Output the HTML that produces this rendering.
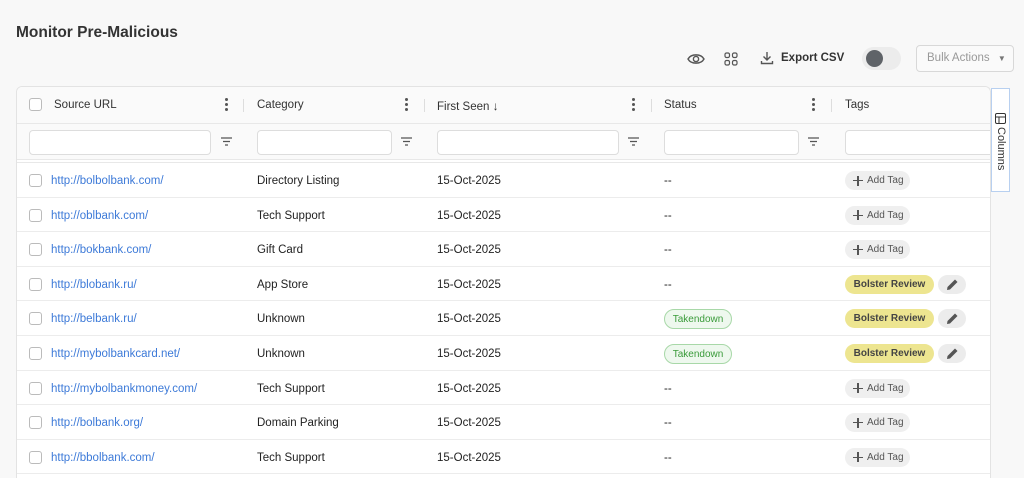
<!DOCTYPE html>
<html style="height:478px;overflow:hidden"><head><style>
*{box-sizing:border-box;margin:0;padding:0}
body{width:1024px;height:478px;overflow:hidden;background:#f8f8f8;font-family:"Liberation Sans",sans-serif;position:relative;color:#222}
.abs{position:absolute}
h1{position:absolute;left:16px;top:24px;font-size:15.5px;font-weight:bold;color:#333}
.tbl{position:absolute;left:16px;top:86px;width:975px;height:392px;background:#fff;border:1px solid #e3e3e3;border-bottom:none;border-radius:6px 6px 0 0;overflow:hidden}
.hdr{position:absolute;left:0;top:0;width:100%;height:37px;background:#fafafa;border-bottom:1px solid #e8e8e8}
.flt{position:absolute;left:0;top:37px;width:100%;height:36px;background:#fafafa;border-bottom:1px solid #e8e8e8}
.ht{position:absolute;top:12px;font-size:11.5px;color:#333}
.dots{position:absolute;top:11px;width:3px;height:14px}
.dots i{display:block;width:3px;height:3px;border-radius:50%;background:#555;margin-bottom:2px}
.sep{position:absolute;top:12px;width:1px;height:13px;background:#ddd}
.in{position:absolute;top:6px;height:25px;background:#fff;border:1px solid #ddd;border-radius:4px}
.fi{position:absolute;top:13px}
.cb{position:absolute;width:13px;height:13px;border:1px solid #bbb;border-radius:3px;background:#fff}
.row{position:absolute;left:0;width:100%;height:34.6px;border-bottom:1px solid #ececec;font-size:11.5px}
.row span{position:absolute;top:12px}
.url{color:#3d7ad8}
.add{position:absolute;top:8px;left:828px;height:19px;width:65px;background:#efefef;border-radius:10px;font-size:10px;color:#555;line-height:20px;padding-left:22px}
.add:before{content:"";position:absolute;left:8px;top:9px;width:10px;height:1.3px;background:#555}
.add:after{content:"";position:absolute;left:12.4px;top:4.6px;width:1.3px;height:10px;background:#555}
.br{position:absolute;top:8px;left:828px;height:19px;width:89px;background:#ede590;border-radius:10px;font-size:10px;font-weight:bold;color:#444;line-height:19px;text-align:center}
.ed{position:absolute;top:8px;left:921px;width:28px;height:19px;background:#ececec;border-radius:10px}
.td{position:absolute;top:8px;left:647px;height:20px;width:68px;background:#eef8ee;border:1px solid #a8d8a8;border-radius:10px;font-size:10px;color:#3a9b3a;line-height:19px;text-align:center}
</style></head><body>
<h1>Monitor Pre-Malicious</h1>
<svg class="abs" style="left:687px;top:52px" width="18" height="14" viewBox="0 0 18 14"><path d="M1 7C4 1.5 14 1.5 17 7C14 12.5 4 12.5 1 7Z" fill="none" stroke="#555" stroke-width="1.4"/><circle cx="9" cy="7" r="2.6" fill="none" stroke="#555" stroke-width="1.4"/></svg>
<svg class="abs" style="left:724px;top:52px" width="14" height="14"><g fill="none" stroke="#555" stroke-width="1.2"><rect x="1" y="1" width="4.5" height="4.5" rx="1.5"/><rect x="8.5" y="1" width="4.5" height="4.5" rx="1.5"/><rect x="1" y="8.5" width="4.5" height="4.5" rx="1.5"/><rect x="8.5" y="8.5" width="4.5" height="4.5" rx="1.5"/></g></svg>
<svg class="abs" style="left:760px;top:51px" width="14" height="14"><path d="M7 1V9M3.5 5.5L7 9L10.5 5.5M1.5 10V12.5H12.5V10" fill="none" stroke="#555" stroke-width="1.4"/></svg>
<div class="abs" style="left:781px;top:52px;font-size:11.5px;font-weight:bold;color:#333">Export CSV</div>
<div class="abs" style="left:862px;top:47px;width:39px;height:23px;border-radius:12px;background:#ececec"></div>
<div class="abs" style="left:866px;top:50px;width:17px;height:17px;border-radius:50%;background:#5f6368"></div>
<div class="abs" style="left:916px;top:45px;width:98px;height:27px;border:1px solid #d8d8d8;border-radius:4px;background:#fafafa;font-size:11.5px;color:#999;line-height:25px;padding-left:10px">Bulk Actions <span style="font-size:8px;margin-left:5px;color:#777">▼</span></div>
<div class="tbl">
<div class="hdr">
<div class="cb" style="left:12px;top:11px"></div>
<div class="ht" style="left:37px">Source URL</div>
<div class="dots" style="left:208px"><i></i><i></i><i></i></div><div class="sep" style="left:226px"></div>
<div class="ht" style="left:240px">Category</div>
<div class="dots" style="left:388px"><i></i><i></i><i></i></div><div class="sep" style="left:407px"></div>
<div class="ht" style="left:420px">First Seen <span style="font-size:12px">↓</span></div>
<div class="dots" style="left:615px"><i></i><i></i><i></i></div><div class="sep" style="left:634px"></div>
<div class="ht" style="left:647px">Status</div>
<div class="dots" style="left:795px"><i></i><i></i><i></i></div><div class="sep" style="left:814px"></div>
<div class="ht" style="left:828px">Tags</div>
</div>
<div class="flt">
<div class="in" style="left:12px;width:182px"></div><svg class="fi" style="left:204px" width="11" height="9"><path d="M0 1H11M2 4.5H9M4 8H7" stroke="#555" stroke-width="1.2"/></svg>
<div class="in" style="left:240px;width:135px"></div><svg class="fi" style="left:384px" width="11" height="9"><path d="M0 1H11M2 4.5H9M4 8H7" stroke="#555" stroke-width="1.2"/></svg>
<div class="in" style="left:420px;width:182px"></div><svg class="fi" style="left:611px" width="11" height="9"><path d="M0 1H11M2 4.5H9M4 8H7" stroke="#555" stroke-width="1.2"/></svg>
<div class="in" style="left:647px;width:135px"></div><svg class="fi" style="left:791px" width="11" height="9"><path d="M0 1H11M2 4.5H9M4 8H7" stroke="#555" stroke-width="1.2"/></svg>
<div class="in" style="left:828px;width:160px"></div>
</div>
<div class="abs" style="left:0;top:74px;width:100%;height:2px;border-bottom:1px solid #e8e8e8"></div>
<div class="row" style="top:76px"><div class="cb" style="left:12px;top:11px"></div><span class="url" style="left:34px">http://bolbolbank.com/</span><span style="left:240px">Directory Listing</span><span style="left:420px">15-Oct-2025</span><span style="left:647px">--</span><div class="add">Add Tag</div></div>
<div class="row" style="top:110.6px"><div class="cb" style="left:12px;top:11px"></div><span class="url" style="left:34px">http://oblbank.com/</span><span style="left:240px">Tech Support</span><span style="left:420px">15-Oct-2025</span><span style="left:647px">--</span><div class="add">Add Tag</div></div>
<div class="row" style="top:145.2px"><div class="cb" style="left:12px;top:11px"></div><span class="url" style="left:34px">http://bokbank.com/</span><span style="left:240px">Gift Card</span><span style="left:420px">15-Oct-2025</span><span style="left:647px">--</span><div class="add">Add Tag</div></div>
<div class="row" style="top:179.8px"><div class="cb" style="left:12px;top:11px"></div><span class="url" style="left:34px">http://blobank.ru/</span><span style="left:240px">App Store</span><span style="left:420px">15-Oct-2025</span><span style="left:647px">--</span><div class="br">Bolster Review</div><div class="ed"><svg style="position:absolute;left:8px;top:3px" width="13" height="13"><path d="M1 12L1.5 9L9 1.5L11.5 4L4 11.5Z" fill="#555"/></svg></div></div>
<div class="row" style="top:214.4px"><div class="cb" style="left:12px;top:11px"></div><span class="url" style="left:34px">http://belbank.ru/</span><span style="left:240px">Unknown</span><span style="left:420px">15-Oct-2025</span><div class="td">Takendown</div><div class="br">Bolster Review</div><div class="ed"><svg style="position:absolute;left:8px;top:3px" width="13" height="13"><path d="M1 12L1.5 9L9 1.5L11.5 4L4 11.5Z" fill="#555"/></svg></div></div>
<div class="row" style="top:249px"><div class="cb" style="left:12px;top:11px"></div><span class="url" style="left:34px">http://mybolbankcard.net/</span><span style="left:240px">Unknown</span><span style="left:420px">15-Oct-2025</span><div class="td">Takendown</div><div class="br">Bolster Review</div><div class="ed"><svg style="position:absolute;left:8px;top:3px" width="13" height="13"><path d="M1 12L1.5 9L9 1.5L11.5 4L4 11.5Z" fill="#555"/></svg></div></div>
<div class="row" style="top:283.6px"><div class="cb" style="left:12px;top:11px"></div><span class="url" style="left:34px">http://mybolbankmoney.com/</span><span style="left:240px">Tech Support</span><span style="left:420px">15-Oct-2025</span><span style="left:647px">--</span><div class="add">Add Tag</div></div>
<div class="row" style="top:318.2px"><div class="cb" style="left:12px;top:11px"></div><span class="url" style="left:34px">http://bolbank.org/</span><span style="left:240px">Domain Parking</span><span style="left:420px">15-Oct-2025</span><span style="left:647px">--</span><div class="add">Add Tag</div></div>
<div class="row" style="top:352.8px"><div class="cb" style="left:12px;top:11px"></div><span class="url" style="left:34px">http://bbolbank.com/</span><span style="left:240px">Tech Support</span><span style="left:420px">15-Oct-2025</span><span style="left:647px">--</span><div class="add">Add Tag</div></div>
</div>
<div class="abs" style="left:991px;top:88px;width:19px;height:104px;background:#fff;border:1px solid #b8d0f0"></div>
<svg class="abs" style="left:995px;top:113px" width="11" height="11"><g fill="none" stroke="#333" stroke-width="1"><rect x="0.5" y="0.5" width="10" height="10" rx="1.5"/><path d="M0.5 4H10.5M4 4V10.5"/></g></svg>
<div class="abs" style="left:1001px;top:127px;transform-origin:0 0;transform:rotate(90deg) translate(0,-6px);font-size:11px;color:#333;white-space:nowrap">Columns</div>
</body></html>
